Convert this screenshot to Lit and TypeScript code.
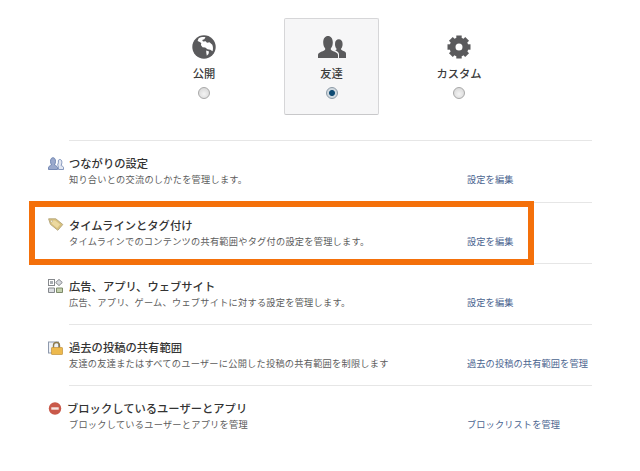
import { LitElement, html, css, svg } from "lit";
import { customElement } from "lit/decorators.js";

const globe = html`<svg width="24" height="24" viewBox="0 0 24 24"><circle cx="12" cy="12" r="11.700" fill="#5a5a5c"/><path fill="#fff" d="M6.500 3.400C8.800 1.900 11.500 1.600 13.500 2.300L12.300 4.300 10.200 5 11 6.600 13.700 6.200 15 7.800 17.500 7.200 20.300 9.800C21.200 12 21.200 14.300 20.500 16.300L18.300 14.700 15.500 14.200 13.200 12.500 10.500 12.300 8.900 10 9.300 8 7.300 6.800 5.600 6z"/><path fill="#fff" d="M14.200 15.500L17 16.500 16.500 19 14.800 20.800 14.300 18z"/></svg>`;
const people = html`<svg width="28" height="22" viewBox="0 0 28 22"><path fill="#5a5a5c" d="M0 22v-3c0-2.300 3.200-3.300 5.700-4.300 1.300-.5 1.700-1.200 1.500-2.200C6 11.300 5.200 9 5.200 6.300 5.200 2.300 7.200 0 10 0s4.800 2.300 4.800 6.300c0 2.700-.8 5-2 6.200-.2 1 .2 1.700 1.500 2.200 2.500 1 5.700 2 5.700 4.300v3z"/><path fill="#5a5a5c" d="M21 22v-3.700c0-1.800-1.700-3-3.800-4 1-.3 1.500-.8 1.400-1.500-1-1-1.600-2.800-1.600-4.900 0-3 1.700-4.600 3.800-4.600s3.800 1.600 3.800 4.600c0 2.100-.6 3.900-1.600 4.900-.1.800.4 1.300 1.400 1.600 1.200.5 3.600 1.200 3.600 3V22z"/></svg>`;
const gearTeeth = [0, 45, 90, 135, 180, 225, 270, 315];
const gear = html`<svg width="24" height="24" viewBox="0 0 24 24"><circle cx="12" cy="12" r="6.500" fill="none" stroke="#5a5a5c" stroke-width="6"/>${gearTeeth.map(
  (a) => svg`<rect x="9.300" y="0.500" width="5.400" height="6" fill="#5a5a5c" transform="rotate(${a} 12 12)"/>`
)}</svg>`;

const icFriends = html`<svg width="16" height="13" viewBox="0 0 16 13"><path fill="#9aa9cc" stroke="#5f77a8" stroke-width=".8" d="M.5 12.500v-2c0-1.300 2-1.700 3-2.500C2.800 7 2.500 5.700 2.500 4.300 2.500 2 3.500.7 5 .7s2.500 1.300 2.500 3.600c0 1.400-.3 2.700-1 3.700 1 .8 3 1.200 3 2.500v2z"/><path fill="#e4e8f2" stroke="#6a80ad" stroke-width=".8" d="M10.500 12.500h5v-2c0-1.100-1.600-1.400-2.500-2.100.6-.8.900-1.900.9-3.100 0-1.700-.8-2.800-2-2.800-.6 0-1.100.3-1.500.8.200 1.700-.1 3.500-.8 4.800.6.600.9 1.300.9 4.400z"/></svg>`;
const icTag = html`<svg width="16" height="13" viewBox="0 0 16 13"><path fill="#d9c27e" stroke="#b3a57c" stroke-width=".9" d="M.6.800h7.200l7 5.700-5 5.800-7.400-6z"/><path fill="#ecd9a0" d="M2.600 2.500h4.500l5 4.100-3 3.400-5.200-4.300z"/><circle cx="3.600" cy="3.200" r="1" fill="#fff" stroke="#a99a6d" stroke-width=".5"/></svg>`;
const icApps = html`<svg width="15" height="14" viewBox="0 0 15 14"><rect x=".5" y=".5" width="6" height="6" fill="#fff" stroke="#85888c"/><rect x="2" y="2" width="3" height="3" fill="#a8adb3"/><path d="M11 .4l3.300 3.100L11 6.600 7.700 3.500z" fill="#d8dbe0" stroke="#85888c"/><path d="M.5 9h6v4.500h-6z" fill="#dcdfe3" stroke="#85888c"/><path d="M8.500 9h6v4.500h-6z" fill="#c4d1ae" stroke="#7d8a6a"/></svg>`;
const icLock = html`<svg width="15" height="14" viewBox="0 0 15 14"><rect x=".5" y="1" width="10" height="11" fill="#eef1f6" stroke="#8e99ad"/><path d="M5.500 7V4.500a3 3 0 0 1 6 0V7" fill="none" stroke="#8d7a4c" stroke-width="1.400"/><rect x="3.500" y="6.500" width="11" height="7" rx=".6" fill="#edb94d" stroke="#c2913a" stroke-width=".7"/></svg>`;
const icBlock = html`<svg width="14" height="13" viewBox="0 0 14 14"><circle cx="7" cy="7" r="6.700" fill="#c9594a"/><rect x="3" y="5.700" width="8" height="2.600" fill="#f6e6e3"/></svg>`;

const rows = [
  { icon: icFriends, title: "つながりの設定", desc: "知り合いとの交流のしかたを管理します。", link: "設定を編集", hang: false },
  { icon: icTag, title: "タイムラインとタグ付け", desc: "タイムラインでのコンテンツの共有範囲やタグ付の設定を管理します。", link: "設定を編集", hang: false },
  { icon: icApps, title: "広告、アプリ、ウェブサイト", desc: "広告、アプリ、ゲーム、ウェブサイトに対する設定を管理します。", link: "設定を編集", hang: false },
  { icon: icLock, title: "過去の投稿の共有範囲", desc: "友達の友達またはすべてのユーザーに公開した投稿の共有範囲を制限します", link: "過去の投稿の共有範囲を管理", hang: false },
  { icon: icBlock, title: "ブロックしているユーザーとアプリ", desc: "ブロックしているユーザーとアプリを管理", link: "ブロックリストを管理", hang: true },
];

const options = [
  { icon: globe, label: "公開", on: false },
  { icon: people, label: "友達", on: true },
  { icon: gear, label: "カスタム", on: false },
];

@customElement("app-root")
export class AppRoot extends LitElement {
  static styles = css`
    :host {
      display: block;
      position: relative;
      width: 640px;
      height: 471px;
      overflow: hidden;
      background: #fff;
      font-family: "Noto Sans CJK JP", "Liberation Sans", sans-serif;
      color: #333;
    }
    .picker {
      display: flex;
      justify-content: center;
      padding: 18px 0 25.4px 23px;
      gap: 32.5px;
      height: 97px;
    }
    .opt {
      width: 95px;
      height: 97px;
      box-sizing: border-box;
      display: flex;
      flex-direction: column;
      align-items: center;
      padding-top: 16px;
      border: 1px solid transparent;
      border-radius: 2px;
    }
    .opt.on {
      background: #f6f6f7;
      border-color: #d6d6d8;
      border-bottom-color: #c8c8ca;
    }
    .opt svg { display: block; height: 24px; }
    .opt .label {
      font-size: 11.3px;
      font-weight: 500;
      line-height: 16px;
      margin-top: 6px;
      color: #3c3c3c;
    }
    .radio {
      margin-top: 6px;
      width: 12px;
      height: 12px;
      box-sizing: border-box;
      border-radius: 50%;
      border: 1px solid #a8a8a8;
      background: radial-gradient(circle at 50% 60%, #f4f4f4, #d2d2d2);
    }
    .radio.on {
      border-color: #8c9aa6;
      background: radial-gradient(circle, #0d4a73 0 2.500px, #cfd8df 3.500px);
    }
    .list {
      padding: 0 48px;
    }
    .row {
      display: flex;
      height: 61.25px;
    }
    .ic {
      width: 21px;
      flex: none;
      padding-top: 16.6px;
      box-sizing: border-box;
    }
    .ic svg { display: block; }
    .body {
      flex: 1;
      display: grid;
      grid-template-columns: 398px 1fr;
      border-top: 1px solid #e6e6e6;
      padding-top: 14px;
    }
    .title {
      font-size: 11.3px;
      font-weight: 500;
      line-height: 16px;
      color: #333;
      white-space: nowrap;
    }
    .title.hang { margin-left: -2px; }
    .desc {
      font-size: 9.2px;
      line-height: 13px;
      margin-top: 2px;
      letter-spacing: 0.25px;
      color: #5c5c5c;
      white-space: nowrap;
    }
    .link {
      font-size: 9.2px;
      line-height: 13px;
      margin-top: 18px;
      letter-spacing: 0.12px;
      color: #4a648f;
      white-space: nowrap;
      text-decoration: none;
    }
    .mark {
      position: absolute;
      left: 29px;
      top: 201px;
      width: 505px;
      height: 64px;
      box-sizing: border-box;
      border: 6px solid #f4700a;
      pointer-events: none;
    }
  `;

  render() {
    return html`
      <div class="picker">
        ${options.map(
          (o) => html`<div class="opt ${o.on ? "on" : ""}">
            ${o.icon}
            <div class="label">${o.label}</div>
            <div class="radio ${o.on ? "on" : ""}"></div>
          </div>`
        )}
      </div>
      <div class="list">
        ${rows.map(
          (r) => html`<div class="row">
            <div class="ic">${r.icon}</div>
            <div class="body">
              <div>
                <div class="title ${r.hang ? "hang" : ""}">${r.title}</div>
                <div class="desc">${r.desc}</div>
              </div>
              <a class="link">${r.link}</a>
            </div>
          </div>`
        )}
      </div>
      <div class="mark"></div>
    `;
  }
}
